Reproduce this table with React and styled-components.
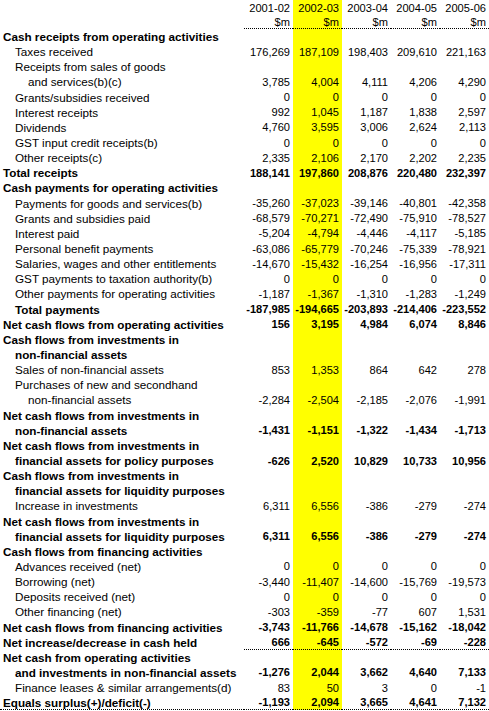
import React from 'react';
import styled, { createGlobalStyle } from 'styled-components';

const GlobalStyle = createGlobalStyle`
  body {
    margin: 0;
    background: #fff;
    font-family: "Liberation Sans", Arial, sans-serif;
    font-size: 11.7px;
    color: #000;
  }
`;

const Sheet = styled.div`
  width: 489px;
  display: flex;
  flex-direction: column;
`;

const Row = styled.div`
  display: grid;
  grid-template-columns: 244px repeat(5, 49px);
  height: ${({ $h }) => $h};
  font-weight: ${({ $bold }) => ($bold ? 700 : 400)};
`;

const Cell = styled.div`
  box-sizing: border-box;
  display: flex;
  align-items: center;
  white-space: nowrap;
  border-bottom: ${({ $rule }) => ($rule ? '1px dotted #000' : 'none')};
`;

const Label = styled(Cell)`
  padding-left: ${({ $indent }) => $indent}px;
`;

const Num = styled(Cell)`
  justify-content: flex-end;
  padding-right: 3px;
  font-size: 11.1px;
  background: ${({ $hl }) => ($hl ? '#ffff00' : 'transparent')};
`;

const years = ['2001-02', '2002-03', '2003-04', '2004-05', '2005-06'];
const units = ['$m', '$m', '$m', '$m', '$m'];
const zeros = ['0', '0', '0', '0', '0'];

const rows = [
  { label: 'Cash receipts from operating activities', bold: true },
  { label: 'Taxes received', indent: 1, v: ['176,269', '187,109', '198,403', '209,610', '221,163'] },
  { label: 'Receipts from sales of goods', indent: 1 },
  { label: 'and services(b)(c)', indent: 2, v: ['3,785', '4,004', '4,111', '4,206', '4,290'] },
  { label: 'Grants/subsidies received', indent: 1, v: zeros },
  { label: 'Interest receipts', indent: 1, v: ['992', '1,045', '1,187', '1,838', '2,597'] },
  { label: 'Dividends', indent: 1, v: ['4,760', '3,595', '3,006', '2,624', '2,113'] },
  { label: 'GST input credit receipts(b)', indent: 1, v: zeros },
  { label: 'Other receipts(c)', indent: 1, v: ['2,335', '2,106', '2,170', '2,202', '2,235'] },
  { label: 'Total receipts', bold: true, v: ['188,141', '197,860', '208,876', '220,480', '232,397'] },
  { label: 'Cash payments for operating activities', bold: true },
  { label: 'Payments for goods and services(b)', indent: 1, v: ['-35,260', '-37,023', '-39,146', '-40,801', '-42,358'] },
  { label: 'Grants and subsidies paid', indent: 1, v: ['-68,579', '-70,271', '-72,490', '-75,910', '-78,527'] },
  { label: 'Interest paid', indent: 1, v: ['-5,204', '-4,794', '-4,446', '-4,117', '-5,185'] },
  { label: 'Personal benefit payments', indent: 1, v: ['-63,086', '-65,779', '-70,246', '-75,339', '-78,921'] },
  { label: 'Salaries, wages and other entitlements', indent: 1, v: ['-14,670', '-15,432', '-16,254', '-16,956', '-17,311'] },
  { label: 'GST payments to taxation authority(b)', indent: 1, v: zeros },
  { label: 'Other payments for operating activities', indent: 1, v: ['-1,187', '-1,367', '-1,310', '-1,283', '-1,249'] },
  { label: 'Total payments', bold: true, indent: 1, v: ['-187,985', '-194,665', '-203,893', '-214,406', '-223,552'] },
  { label: 'Net cash flows from operating activities', bold: true, v: ['156', '3,195', '4,984', '6,074', '8,846'] },
  { label: 'Cash flows from investments in', bold: true },
  { label: 'non-financial assets', bold: true, indent: 1 },
  { label: 'Sales of non-financial assets', indent: 1, v: ['853', '1,353', '864', '642', '278'] },
  { label: 'Purchases of new and secondhand', indent: 1 },
  { label: 'non-financial assets', indent: 2, v: ['-2,284', '-2,504', '-2,185', '-2,076', '-1,991'] },
  { label: 'Net cash flows from investments in', bold: true },
  { label: 'non-financial assets', bold: true, indent: 1, v: ['-1,431', '-1,151', '-1,322', '-1,434', '-1,713'] },
  { label: 'Net cash flows from investments in', bold: true },
  { label: 'financial assets for policy purposes', bold: true, indent: 1, v: ['-626', '2,520', '10,829', '10,733', '10,956'] },
  { label: 'Cash flows from investments in', bold: true },
  { label: 'financial assets for liquidity purposes', bold: true, indent: 1 },
  { label: 'Increase in investments', indent: 1, v: ['6,311', '6,556', '-386', '-279', '-274'] },
  { label: 'Net cash flows from investments in', bold: true },
  { label: 'financial assets for liquidity purposes', bold: true, indent: 1, v: ['6,311', '6,556', '-386', '-279', '-274'] },
  { label: 'Cash flows from financing activities', bold: true },
  { label: 'Advances received (net)', indent: 1, v: zeros },
  { label: 'Borrowing (net)', indent: 1, v: ['-3,440', '-11,407', '-14,600', '-15,769', '-19,573'] },
  { label: 'Deposits received (net)', indent: 1, v: zeros },
  { label: 'Other financing (net)', indent: 1, v: ['-303', '-359', '-77', '607', '1,531'] },
  { label: 'Net cash flows from financing activities', bold: true, v: ['-3,743', '-11,766', '-14,678', '-15,162', '-18,042'] },
  { label: 'Net increase/decrease in cash held', bold: true, rule: true, v: ['666', '-645', '-572', '-69', '-228'] },
  { label: 'Net cash from operating activities', bold: true },
  { label: 'and investments in non-financial assets', bold: true, indent: 1, v: ['-1,276', '2,044', '3,662', '4,640', '7,133'] },
  { label: 'Finance leases & similar arrangements(d)', indent: 1, v: ['83', '50', '3', '0', '-1'] },
  { label: 'Equals surplus(+)/deficit(-)', bold: true, rule: true, full: true, v: ['-1,193', '2,094', '3,665', '4,641', '7,132'] },
];

const indents = [3, 15, 28];

function NumCells({ values, rule }) {
  return [0, 1, 2, 3, 4].map((i) => (
    <Num key={i} $hl={i === 1} $rule={rule}>
      {values ? values[i] : ''}
    </Num>
  ));
}

export default function App() {
  return (
    <>
      <GlobalStyle />
      <Sheet>
        <Row $h="15px">
          <Label $indent={3} />
          <NumCells values={years} />
        </Row>
        <Row $h="14px">
          <Label $indent={3} />
          <NumCells values={units} rule />
        </Row>
        {rows.map((r, i) => (
          <Row key={i} $h="15.15px" $bold={r.bold}>
            <Label $indent={indents[r.indent || 0]} $rule={r.full}>
              {r.label}
            </Label>
            <NumCells values={r.v} rule={r.rule} />
          </Row>
        ))}
      </Sheet>
    </>
  );
}
